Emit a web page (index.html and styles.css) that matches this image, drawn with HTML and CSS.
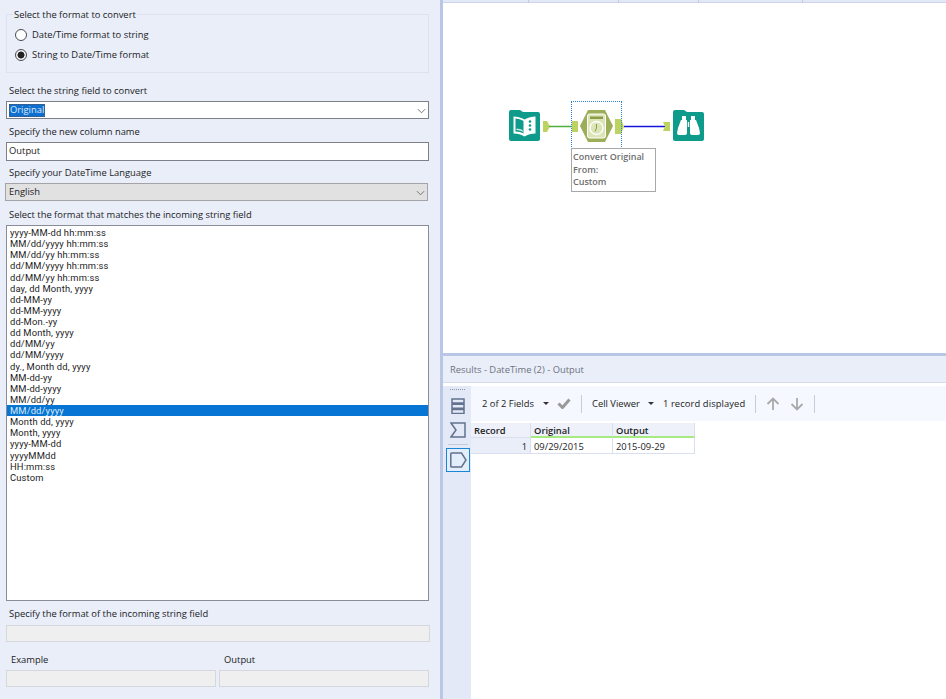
FILE: index.html
```html
<!DOCTYPE html>
<html lang="en">
<head>
<meta charset="utf-8">
<title>DateTime tool</title>
<link rel="stylesheet" href="styles.css">
</head>
<body>
<div class="app">
  <section class="config">
    <fieldset class="group">
      <legend>Select the format to convert</legend>
      <div class="radio-row"><span class="radio"></span>Date/Time format to string</div>
      <div class="radio-row"><span class="radio on"></span>String to Date/Time format</div>
    </fieldset>
    <div class="label first">Select the string field to convert</div>
    <div class="combo"><span class="hl">Original</span><svg class="chev" viewBox="0 0 10 6"><path d="M1 1l4 4 4-4"/></svg></div>
    <div class="label l2">Specify the new column name</div>
    <div class="textbox">Output</div>
    <div class="label l3">Specify your DateTime Language</div>
    <div class="combo grey"><span class="grey-text">English</span><svg class="chev" viewBox="0 0 10 6"><path d="M1 1l4 4 4-4"/></svg></div>
    <div class="label l4">Select the format that matches the incoming string field</div>
    <div class="list">
      <div>yyyy-MM-dd hh:mm:ss</div>
      <div>MM/dd/yyyy hh:mm:ss</div>
      <div>MM/dd/yy hh:mm:ss</div>
      <div>dd/MM/yyyy hh:mm:ss</div>
      <div>dd/MM/yy hh:mm:ss</div>
      <div>day, dd Month, yyyy</div>
      <div>dd-MM-yy</div>
      <div>dd-MM-yyyy</div>
      <div>dd-Mon.-yy</div>
      <div>dd Month, yyyy</div>
      <div>dd/MM/yy</div>
      <div>dd/MM/yyyy</div>
      <div>dy., Month dd, yyyy</div>
      <div>MM-dd-yy</div>
      <div>MM-dd-yyyy</div>
      <div>MM/dd/yy</div>
      <div class="sel">MM/dd/yyyy</div>
      <div>Month dd, yyyy</div>
      <div>Month, yyyy</div>
      <div>yyyy-MM-dd</div>
      <div>yyyyMMdd</div>
      <div>HH:mm:ss</div>
      <div>Custom</div>
    </div>
    <div class="label l5">Specify the format of the incoming string field</div>
    <div class="disabled"></div>
    <div class="pair-labels"><span>Example</span><span>Output</span></div>
    <div class="pair"><div class="disabled"></div><div class="disabled"></div></div>
  </section>
  <div class="vsplit"></div>
  <section class="right">
    <div class="tabs"><i class="t1"></i><i class="t2"></i><i class="t3"></i><i class="t4"></i></div>
    <div class="canvas">
      <svg class="node n1" viewBox="0 0 31 31">
        <path d="M0 2q0-2 2-2h9l3 2h15q2 0 2 2v25q0 2-2 2H2q-2 0-2-2z" fill="#0e9b8b"/>
        <path d="M15.500 9.500C12 7.500 8 6.500 4.500 6.500v17c4 0 8 1 11 3 3-2 7-3 11-3v-17c-3.500 0-7.500 1-11 3z" fill="#fff"/>
        <path d="M14.500 11C12 9.500 9 8.500 6.500 8.500v13c3 0 6 .8 8 2zM6.500 18.500c3 0 6 .8 8 2" fill="#0e9b8b"/>
        <path d="M7.500 19.500c2.500.2 5 .8 6.500 1.800" stroke="#fff" fill="none"/>
        <circle cx="21" cy="11.500" r="1.300" fill="#0e9b8b"/><circle cx="21" cy="15.500" r="1.300" fill="#0e9b8b"/><circle cx="21" cy="19.500" r="1.300" fill="#0e9b8b"/>
      </svg>
      <svg class="node wires" viewBox="0 0 170 32">
        <path d="M0 9h4l3 5.500-3 5.500H0z" fill="#bcd35f"/>
        <path d="M6 14.500h24" stroke="#4fae3a" stroke-width="1.500" fill="none"/>
        <rect x="29" y="9" width="6" height="11" fill="#bcd35f"/>
        <path d="M72 7h6l3 7.500-3 7.500h-6z" fill="#bcd35f"/>
        <path d="M81 14.500h42" stroke="#1414dc" stroke-width="1.500" fill="none"/>
        <path d="M120 10h7v9h-7l2-4.500z" fill="#bcd35f"/>
      </svg>
      <div class="select-box"></div>
      <svg class="node n2" viewBox="0 0 33 32">
        <path d="M8 0h17l8 16-8 16H8L0 16z" fill="#9cae58"/>
        <rect x="7.500" y="4" width="18" height="24" rx="2" fill="#dde5b8" stroke="#fff"/>
        <rect x="10" y="6.500" width="13" height="2.500" fill="#8a9e48"/>
        <circle cx="16.500" cy="18" r="6.500" fill="#dde5b8" stroke="#fff" stroke-width="1.300"/>
        <path d="M16.500 14v4l-1.500 3.500" stroke="#8a9e48" fill="none"/>
      </svg>
      <div class="annot">Convert Original<br>From:<br>Custom</div>
      <svg class="node n3" viewBox="0 0 31 31">
        <path d="M0 2q0-2 2-2h9l3 2h15q2 0 2 2v25q0 2-2 2H2q-2 0-2-2z" fill="#0e9b8b"/>
        <path d="M9 6h4v4h1v13q0 2-2 2H6q-2 0-2-2l1-5 3-8h1zM18 6h4v4h1l3 8 1 5q0 2-2 2h-6q-2 0-2-2V10h1zM14.800 12h1.400v5h-1.400z" fill="#fff"/>
      </svg>
    </div>
    <div class="hsplit"></div>
    <div class="results-title">Results - DateTime (2) - Output</div>
    <div class="results">
      <aside class="rail">
        <div class="grip"></div>
        <svg class="rail-ic" viewBox="0 0 16 16"><path d="M2 1h12v4H2zM2 6.200h12v4H2zM2 11.400h12v4H2z"/></svg>
        <svg class="rail-ic ic2" viewBox="0 0 16 16"><path d="M1 1h14v14H1l5-7z"/></svg>
        <div class="rail-sep"></div>
        <div class="rail-active"><svg viewBox="0 0 17 16"><path d="M1.500 1h10l4.500 7-4.500 7h-10q-.7 0-.7-.7V1.700q0-.7.700-.7z"/></svg></div>
      </aside>
      <div class="viewer">
        <div class="toolbar">
          <span class="tb-fields">2 of 2 Fields</span><span class="caret"></span>
          <svg class="check" viewBox="0 0 14 11"><path d="M1.500 5.500l4 4 7-8" /></svg>
          <span class="tb-sep"></span>
          <span class="tb-cell">Cell Viewer</span><span class="caret"></span>
          <span class="tb-rec">1 record displayed</span>
          <span class="tb-sep"></span>
          <svg class="arrow" viewBox="0 0 14 14"><path d="M7 13V1.500M1.500 7L7 1.500 12.500 7"/></svg>
          <svg class="arrow" viewBox="0 0 14 14"><path d="M7 1v11.500M1.500 7L7 12.500 12.500 7"/></svg>
          <span class="tb-sep"></span>
        </div>
        <div class="grid">
          <div class="th rec">Record</div><div class="th f">Original</div><div class="th f">Output</div>
          <div class="td rec">1</div><div class="td">09/29/2015</div><div class="td">2015-09-29</div>
        </div>
      </div>
    </div>
  </section>
</div>
</body>
</html>
```
FILE: styles.css
```css
* { box-sizing: border-box; }
html, body { margin: 0; height: 100%; }
body { background: #fff; font: 9.400px/12px "Open Sans", "Noto Sans", sans-serif; color: #1c1c24; overflow: hidden; }
.app { display: flex; width: 946px; height: 699px; }

.config { width: 440px; height: 699px; background: #e9eef9; padding: 14px 10px 0 6px; flex: none; }
.group { margin: 0; width: 423px; height: 59px; border: 1px solid #dde2ee; padding: 0 0 0 8px; position: relative; }
.group legend { position: absolute; top: -6px; left: 6px; padding: 0 1px; background: #e9eef9; }
.radio-row { display: flex; align-items: center; gap: 5px; height: 20px; }
.radio-row:first-of-type { margin-top: 10px; }
.radio { width: 12px; height: 12px; border: 1px solid #4a4a52; border-radius: 50%; background: #fff; flex: none; }
.radio.on { background: radial-gradient(circle, #222 0 3.200px, #f2f2f4 3.800px); }
.label { padding-left: 3px; height: 12px; }
.first { margin-top: 12px; }
.l2 { margin-top: 7px; }
.l3 { margin-top: 6px; }
.l4 { margin-top: 8px; }
.l5 { margin-top: 7px; }
.combo { margin-top: 4px; height: 18px; width: 423px; border: 1px solid #7d8088; background: #fff; padding-left: 2px; display: flex; align-items: center; position: relative; }
.hl { background: #0f6fd0; color: #dce9f7; outline: 1px dotted #555; outline-offset: -1px; padding: 0 1px; height: 13px; line-height: 11px; }
.chev { position: absolute; right: 2px; top: 6px; width: 9px; height: 6px; fill: none; stroke: #666; }
.grey { background: #e1e1e1; border-color: #a4a4a8; margin-left: -1px; padding-left: 3px; }
.grey-text { line-height: 14px; height: 14px; }
.textbox { margin-top: 4px; height: 19px; width: 423px; border: 1px solid #7d8088; background: #fff; padding-left: 2px; line-height: 15px; }
.list { margin-top: 4px; height: 376px; width: 423px; border: 1px solid #8a8d98; background: #fff; padding-top: 1px; font-family: Roboto, "Open Sans", sans-serif; font-size: 9.400px; letter-spacing: .15px; }
.list div { height: 11.130px; line-height: 11.130px; padding-left: 3px; }
.list .sel { background: #0675d3; color: #dceaf8; }
.disabled { margin-top: 5px; height: 17px; border: 1px solid #d4d7dd; background: #efefef; width: 424px; }
.pair-labels { display: flex; margin-top: 12px; height: 12px; padding-left: 5px; }
.pair-labels span:first-child { width: 213px; }
.pair { display: flex; gap: 3px; }
.pair .disabled { margin-top: 4px; width: 210px; }

.vsplit { width: 3px; background: #b9c6e6; flex: none; }
.right { flex: 1; display: flex; flex-direction: column; min-width: 0; }
.tabs { height: 3px; background: #e2e8f6; border-bottom: 1px solid #ccd5eb; display: flex; flex: none; }
.tabs i { display: block; height: 3px; border-right: 1px solid #c6cbd8; }
.t1 { width: 86px; } .t2 { width: 90px; } .t3 { width: 80px; } .t4 { width: 104px; }
.canvas { height: 350px; position: relative; flex: none; background: #fff; }
.node { position: absolute; display: block; }
.n1 { left: 66px; top: 107px; width: 31px; height: 31px; }
.n2 { left: 137px; top: 107px; width: 33px; height: 32px; }
.n3 { left: 230px; top: 107px; width: 31px; height: 31px; }
.wires { left: 100px; top: 109px; width: 170px; height: 32px; }
.select-box { position: absolute; left: 128px; top: 98px; width: 51px; height: 50px; border: 1px dotted #2a86d8; border-bottom: 0; }
.annot { position: absolute; left: 128px; top: 145px; width: 85px; height: 44px; border: 1px solid #a8a8a8; background: #fff; color: #6e6e6e; font-weight: 600; font-size: 9px; line-height: 12.500px; padding: 2px 0 0 1px; }
.hsplit { height: 3px; background: #b9c6e6; flex: none; }
.results-title { height: 27px; background: #e9eef9; border-bottom: 1px solid #d5dbea; color: #6e7280; line-height: 27px; padding-left: 7px; flex: none; }
.results { flex: 1; display: flex; padding-top: 3px; }
.rail { width: 28px; background: #e3e9f6; flex: none; padding-left: 1px; display: flex; flex-direction: column; align-items: center; }
.grip { width: 15px; height: 1px; margin-top: 3px; border-top: 1px dotted #8c93a3; }
.rail-ic { width: 16px; height: 16px; margin-top: 8px; flex: none; fill: none; stroke: #62728f; stroke-width: 1.500px; }
.rail-sep { width: 20px; height: 1px; background: #c3cadb; margin-top: 6px; }
.rail-active { width: 24px; height: 24px; margin-top: 3px; border: 1px solid #1a86d8; background: #e3eefa; padding: 3px; }
.rail-active svg { display: block; width: 17px; height: 16px; fill: none; stroke: #62728f; stroke-width: 1.500px; }
.viewer { flex: 1; min-width: 0; }
.toolbar { height: 35px; background: #f5f8fe; display: flex; align-items: center; padding-left: 11px; }
.tb-fields { width: 53px; white-space: nowrap; }
.caret { width: 0; height: 0; border: 3px solid transparent; border-top-color: #333; border-bottom: 0; margin-left: 8px; }
.check { width: 14px; height: 11px; margin-left: 8px; fill: none; stroke: #999; stroke-width: 3px; }
.tb-sep { width: 1px; height: 18px; background: #c9ccd4; margin: 0 10px; }
.tb-cell { white-space: nowrap; }
.tb-rec { margin-left: 9px; white-space: nowrap; letter-spacing: .1px; }
.arrow { width: 14px; height: 14px; margin-right: 10px; fill: none; stroke: #a9a9a9; stroke-width: 1.800px; }
.arrow + .tb-sep { margin-left: 0; }
.grid { display: grid; grid-template-columns: 60px 82px 82px; grid-template-rows: 15px 16px; width: 224px; margin-top: 2px; }
.th, .td { padding-left: 3px; border-right: 1px solid #d9dfee; border-bottom: 1px solid #d9dfee; }
.th { background: #eef1fa; font-weight: 600; line-height: 15px; }
.th.f { border-bottom: 2px solid #a6ea82; line-height: 15px; }
.td { background: #fff; line-height: 17px; }
.td.rec { background: #e9eef9; text-align: right; padding-right: 3px; }
```
